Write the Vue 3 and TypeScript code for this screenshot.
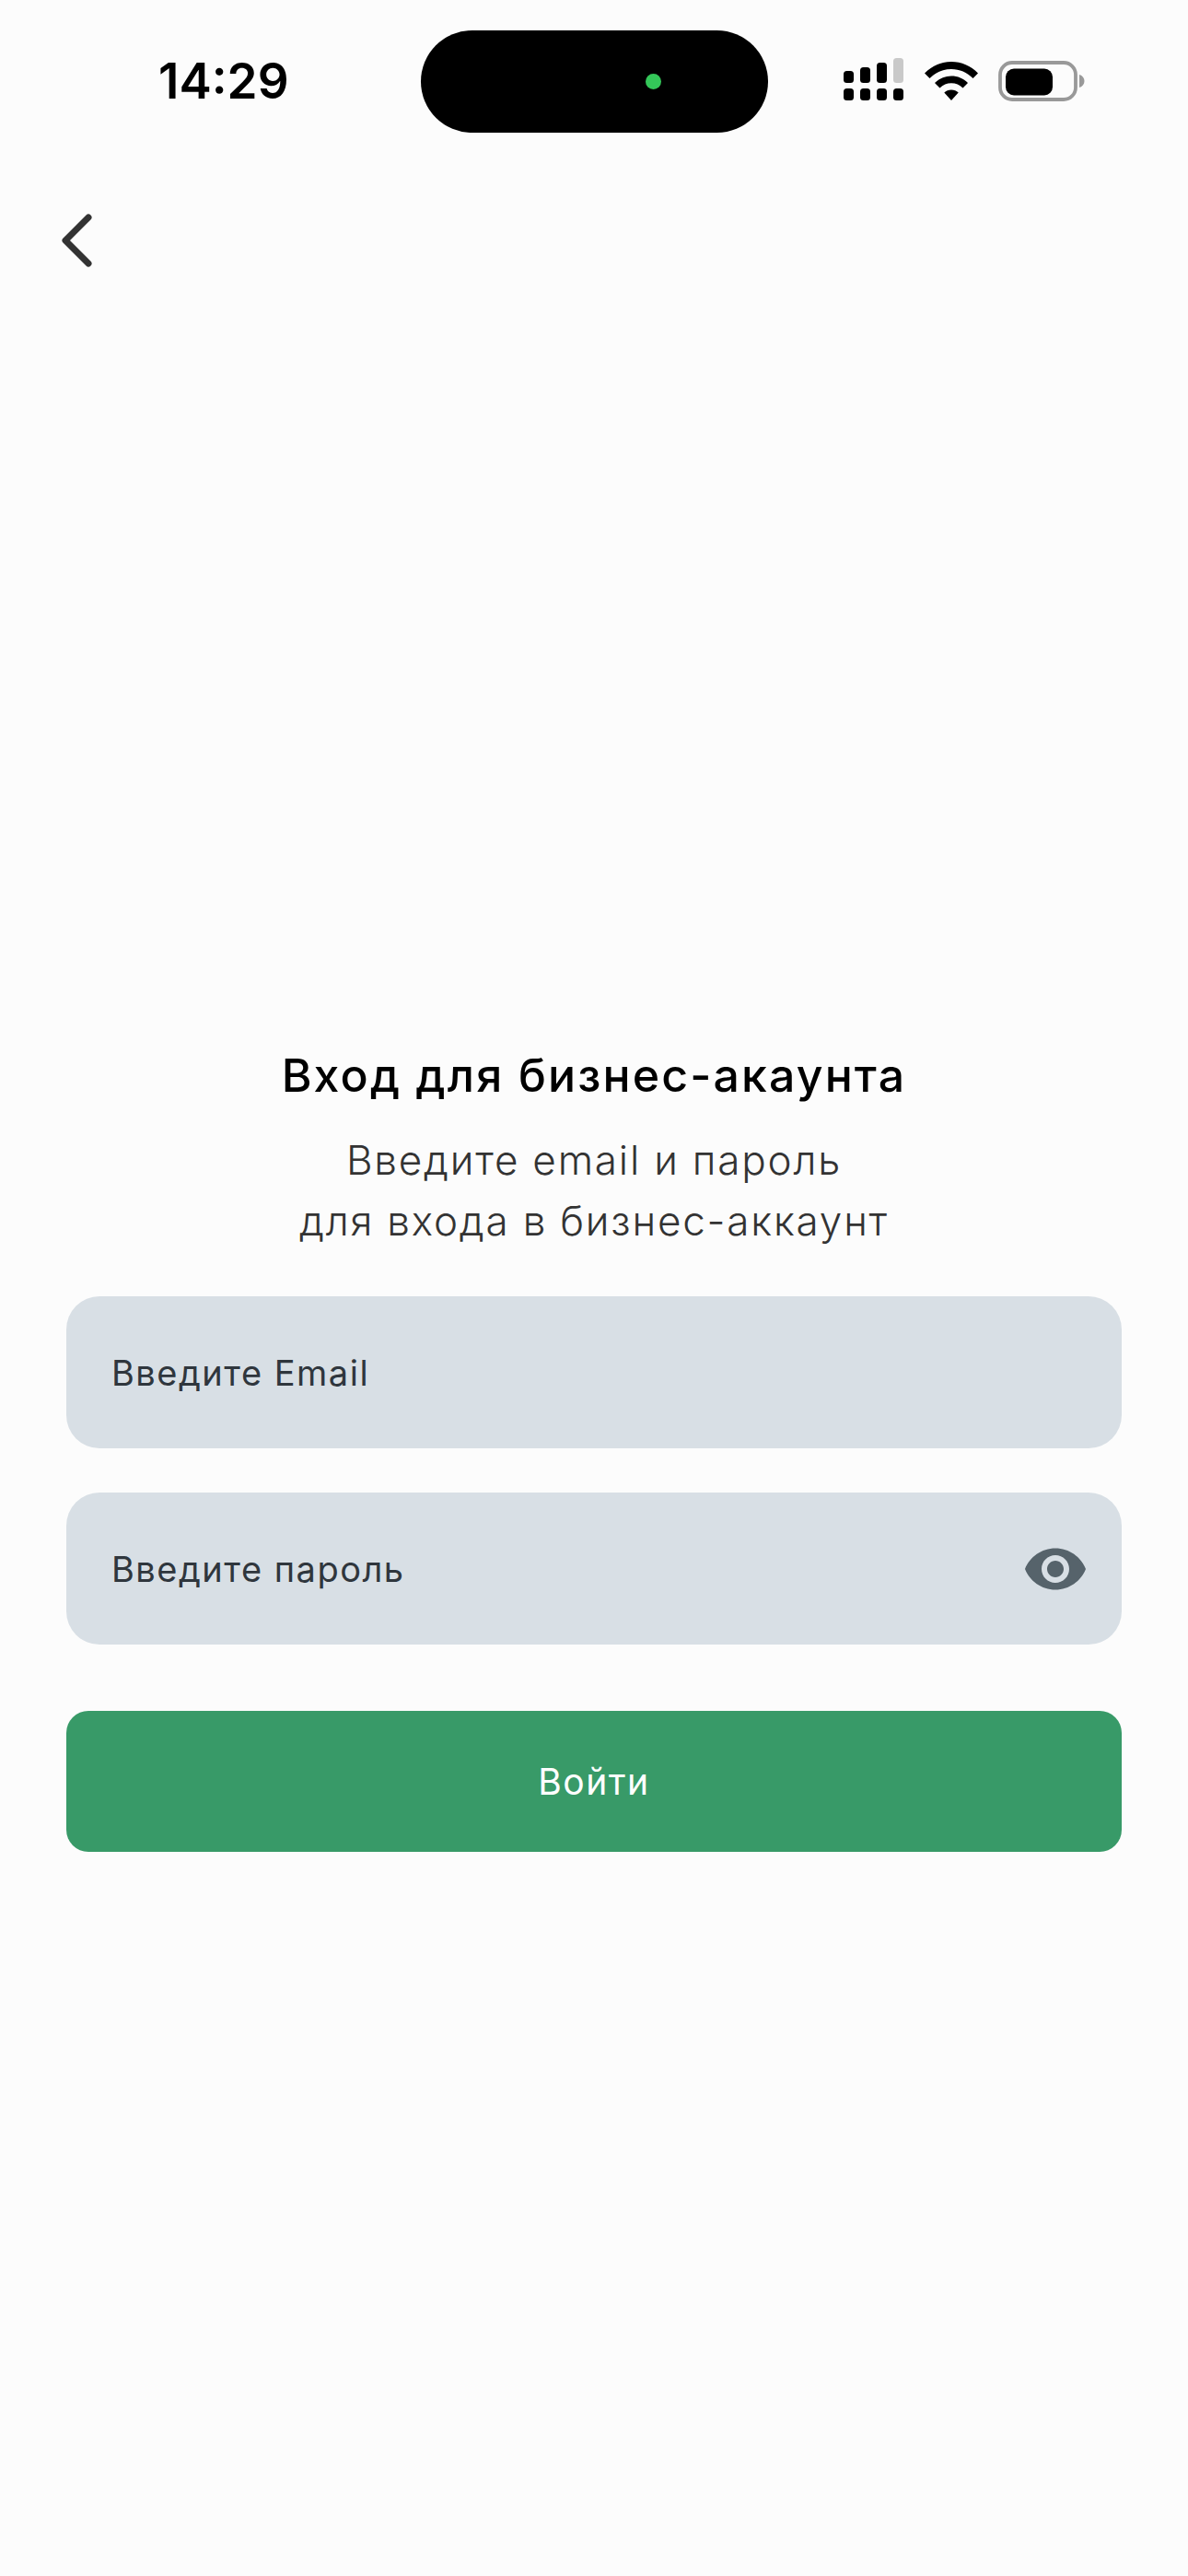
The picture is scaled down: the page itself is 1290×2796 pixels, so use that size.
<script setup lang="ts">
const title = 'Вход для бизнес-акаунта'
</script>

<template>
  <div class="page">
    <header class="status">
      <span class="time">14:29</span>
      <div class="island"><span class="dot"></span></div>
      <div class="icons">
        <svg class="signal" width="65" height="46" viewBox="0 0 65 46">
          <rect x="0" y="14" width="11" height="13" rx="3.5" fill="#000" />
          <rect x="18" y="10" width="11" height="17" rx="3.5" fill="#000" />
          <rect x="36" y="5" width="11" height="22" rx="3.5" fill="#000" />
          <rect x="54" y="0" width="11" height="27" rx="3.5" fill="#c9c9c9" />
          <rect x="0" y="33" width="11" height="13" rx="3.5" fill="#000" />
          <rect x="18" y="33" width="11" height="13" rx="3.5" fill="#000" />
          <rect x="36" y="33" width="11" height="13" rx="3.5" fill="#000" />
          <rect x="54" y="33" width="11" height="13" rx="3.5" fill="#000" />
        </svg>
        <svg class="wifi" width="58" height="42" viewBox="0 0 58 42">
          <path d="M29 0C18 0 8 4.300 0 12.500L5.500 18C12 11.500 20 8 29 8s17 3.500 23.500 10L58 12.500C50 4.300 40 0 29 0z" fill="#000" />
          <path d="M29 15.500c-7 0-13 2.600-18 7.500l5.500 5.500c3.400-3.300 7.800-5.200 12.500-5.200s9.100 1.900 12.500 5.200L47 23c-5-4.900-11-7.500-18-7.500z" fill="#000" />
          <path d="M29 30.500c-3 0-5.700 1.100-7.700 3L29 42l7.700-8.500c-2-1.900-4.700-3-7.700-3z" fill="#000" />
        </svg>
        <svg class="battery" width="94" height="44" viewBox="0 0 94 44">
          <rect x="2" y="2" width="82" height="40" rx="13" fill="none" stroke="#999" stroke-width="3.800" />
          <rect x="8" y="8.500" width="51" height="29" rx="9" fill="#000" />
          <path d="M88 15c3.500 1 5.500 3.800 5.500 7s-2 6-5.500 7z" fill="#999" />
        </svg>
      </div>
    </header>

    <button class="back" type="button" aria-label="Назад">
      <svg width="42" height="66" viewBox="0 0 42 66">
        <path d="M33 8 8 33l25 25" fill="none" stroke="#333" stroke-width="7" stroke-linecap="round" stroke-linejoin="round" />
      </svg>
    </button>

    <main class="form">
      <h1 class="title">{{ title }}</h1>
      <p class="subtitle">Введите email и пароль<br />для входа в бизнес-аккаунт</p>

      <div class="field first"><span>Введите Email</span></div>
      <div class="field second">
        <span>Введите пароль</span>
        <svg class="eye" width="72" height="72" viewBox="0 0 24 24">
          <path fill="#56636b" d="M12 4.500C7 4.500 2.730 7.610 1 12c1.730 4.390 6 7.500 11 7.500s9.270-3.110 11-7.500c-1.730-4.390-6-7.500-11-7.500zM12 17c-2.760 0-5-2.240-5-5s2.240-5 5-5 5 2.240 5 5-2.240 5-5 5zm0-8c-1.660 0-3 1.340-3 3s1.340 3 3 3 3-1.340 3-3-1.340-3-3-3z" />
        </svg>
      </div>
      <button class="submit" type="button">Войти</button>
    </main>
  </div>
</template>

<style>
html, body { background: #fcfcfc; }
</style>

<style scoped>
.page {
  width: 1290px;
  height: 2796px;
  background: #fcfcfc;
  font-family: Inter, "Noto Sans", sans-serif;
  overflow: hidden;
}
.status {
  display: flex;
  align-items: center;
  height: 111px;
  padding: 33px 0 0 172px;
}
.time {
  flex: none;
  width: 285px;
  font-size: 53px;
  font-weight: 600;
  line-height: 111px;
  color: #000;
}
.island {
  flex: none;
  width: 376.500px;
  height: 111px;
  border-radius: 56px;
  background: #000;
  display: flex;
  align-items: center;
  padding-left: 244px;
  box-sizing: border-box;
}
.dot {
  width: 17px;
  height: 17px;
  border-radius: 50%;
  background: #34c759;
}
.icons {
  flex: none;
  display: flex;
  align-items: center;
  margin-left: 82.500px;
}
.signal { flex: none; margin-top: -6px; }
.wifi { flex: none; margin-left: 23px; margin-top: -2px; }
.battery { flex: none; margin-left: 22px; margin-top: -2px; }
.back {
  display: block;
  margin: 84px 0 0 63px;
  padding: 0;
  border: 0;
  background: none;
  height: 66px;
}
.back svg { display: block; }
.form {
  margin: 0 72px;
}
.title {
  margin: 843px 0 0;
  font-size: 50px;
  font-weight: 550;
  line-height: 60px;
  letter-spacing: 2.150px;
  color: #000;
  text-align: center;
}
.subtitle {
  margin: 29px 0 0;
  font-size: 44px;
  font-weight: 300;
  line-height: 66px;
  letter-spacing: 1.800px;
  color: #333;
  text-align: center;
}
.field {
  height: 165px;
  box-sizing: border-box;
  padding: 0 36px 0 49px;
  display: flex;
  align-items: center;
  justify-content: space-between;
  border-radius: 36px;
  background: #d8dfe5;
  font-size: 38px;
  letter-spacing: 1.500px;
  color: #2f363d;
}
.first { margin-top: 49px; }
.second { margin-top: 48px; }
.eye { flex: none; }
.submit {
  display: block;
  width: 100%;
  height: 153px;
  margin-top: 72px;
  border: 0;
  border-radius: 24px;
  background: #389a68;
  color: #fff;
  font-family: inherit;
  font-size: 39px;
  letter-spacing: 1.500px;
}
</style>
